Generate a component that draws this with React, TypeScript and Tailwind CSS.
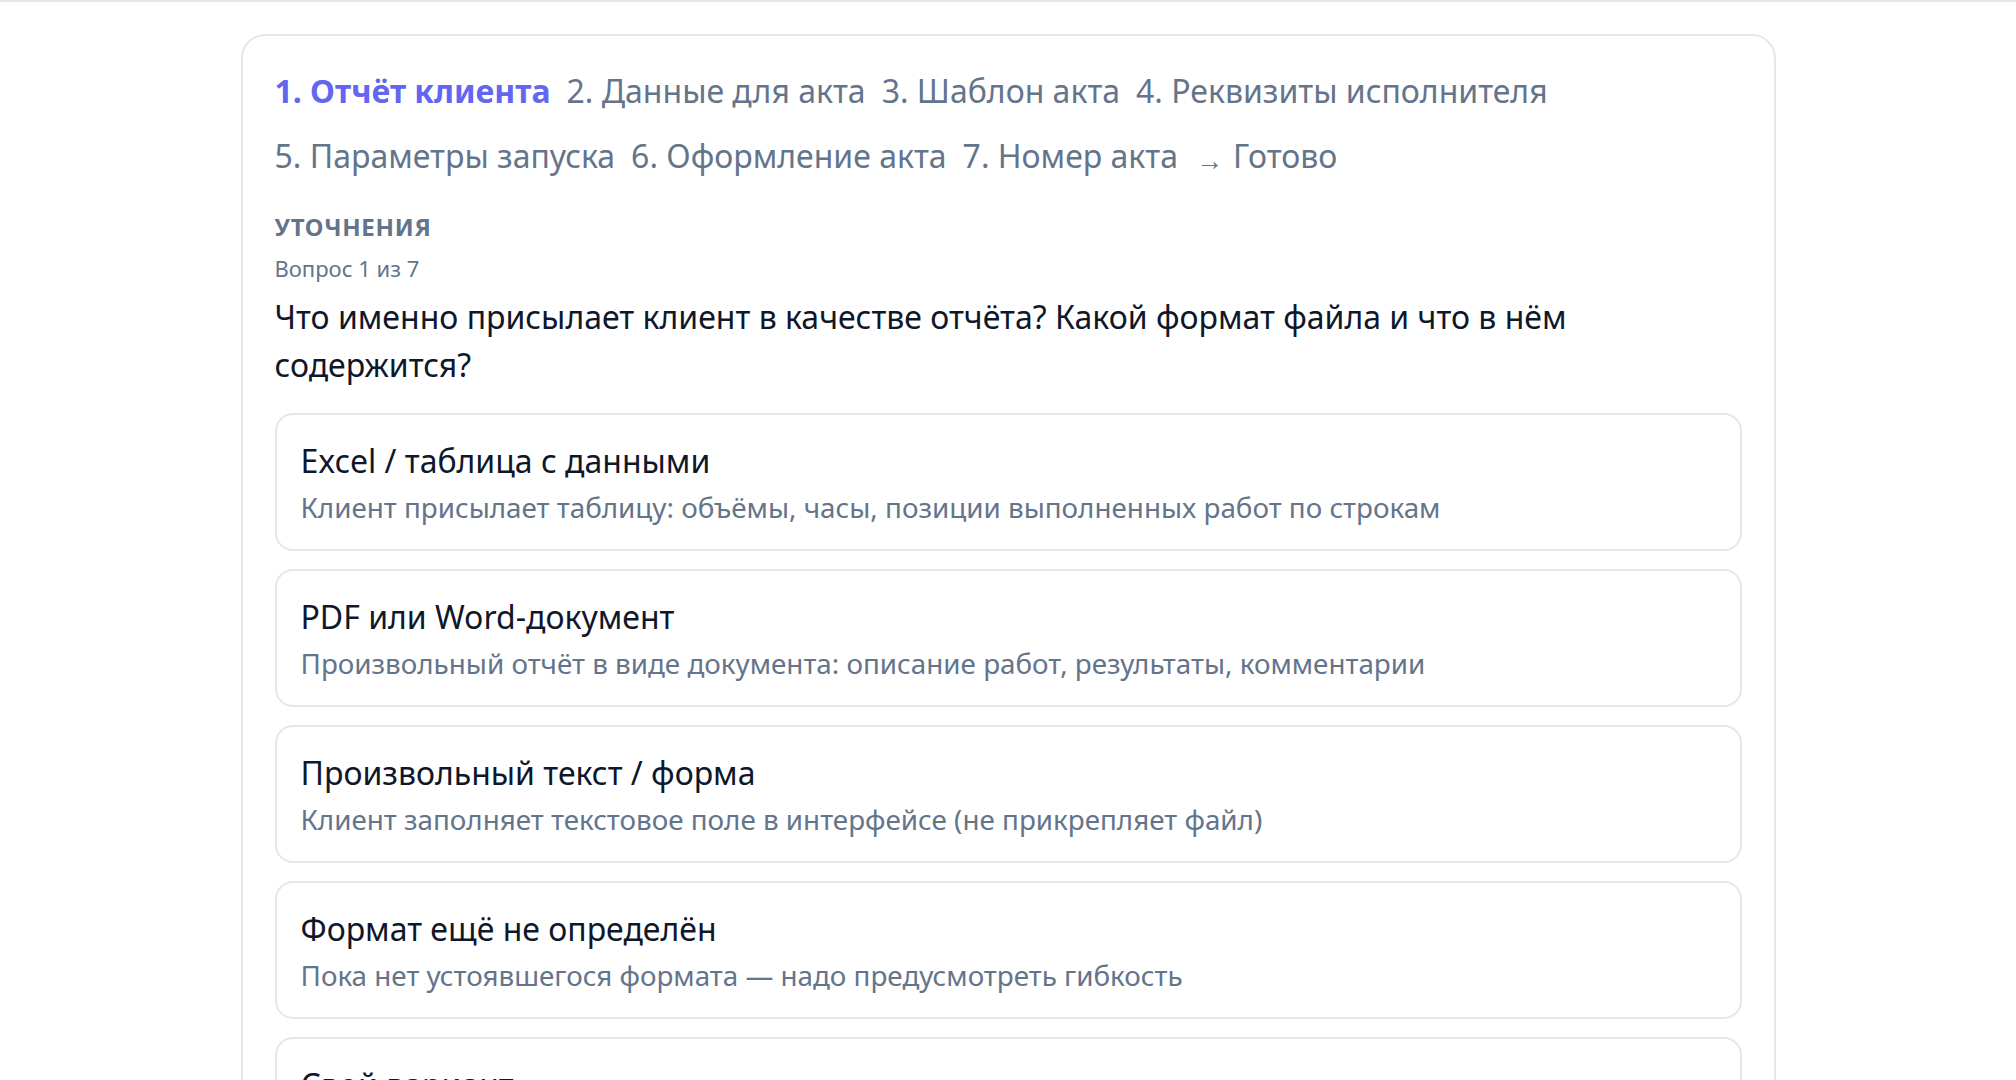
import React from 'react';

interface Step {
    label: string;
    active?: boolean;
}

interface Option {
    title: string;
    description: string;
}

const steps: Step[] = [
    {label: '1. Отчёт клиента', active: true},
    {label: '2. Данные для акта'},
    {label: '3. Шаблон акта'},
    {label: '4. Реквизиты исполнителя'},
    {label: '5. Параметры запуска'},
    {label: '6. Оформление акта'},
    {label: '7. Номер акта'},
];

const options: Option[] = [
    {
        title: 'Excel / таблица с данными',
        description: 'Клиент присылает таблицу: объёмы, часы, позиции выполненных работ по строкам',
    },
    {
        title: 'PDF или Word-документ',
        description: 'Произвольный отчёт в виде документа: описание работ, результаты, комментарии',
    },
    {
        title: 'Произвольный текст / форма',
        description: 'Клиент заполняет текстовое поле в интерфейсе (не прикрепляет файл)',
    },
    {
        title: 'Формат ещё не определён',
        description: 'Пока нет устоявшегося формата — надо предусмотреть гибкость',
    },
    {
        title: 'Свой вариант',
        description: 'Опишите формат отчёта своими словами',
    },
];

const OptionCard = ({title, description}: Option) => (
    <button
        type="button"
        className="block w-full text-left rounded-[18px] border-2 border-[#e2e8f0] bg-white px-[24px] pt-[24px] pb-[22px]"
    >
        <div className="text-[32px] leading-[44px] text-[#0f172a]">{title}</div>
        <div className="mt-[4px] text-[27.8px] leading-[40px] text-[#64748b]">{description}</div>
    </button>
);

export default function App() {
    return (
        <div className="min-h-screen bg-white font-['Noto_Sans',sans-serif]">
            {/* верхняя граница шапки */}
            <div className="h-[2px] bg-[#e2e8f0]"></div>

            <div className="pt-[32px]">
                <div className="mx-auto w-[1535px] rounded-[24px] border-2 border-[#e2e8f0] bg-white px-[32px] pt-[32px] pb-[40px]">
                    {/* шаги */}
                    <div className="flex flex-wrap gap-x-[16px] gap-y-[20px] text-[32px] leading-[45px]">
                        {steps.map((step) => (
                            <span
                                key={step.label}
                                className={step.active ? 'font-bold text-[#6366f1]' : 'text-[#64748b]'}
                            >
                                {step.label}
                            </span>
                        ))}
                        <span className="pl-[2px] text-[#64748b]">
                            <span className="inline-block translate-y-[2px] mr-[10px] text-[27px] leading-none">→</span>
                            Готово
                        </span>
                    </div>

                    {/* вопрос */}
                    <div className="mt-[31px] text-[24px] leading-[36px] font-bold uppercase tracking-[0.03em] text-[#64748b]">
                        Уточнения
                    </div>
                    <div className="mt-[8px] text-[22px] leading-[30px] text-[#64748b]">Вопрос 1 из 7</div>
                    <div className="mt-[10px] max-w-[1344px] text-[32px] leading-[48px] text-[#0f172a]">
                        Что именно присылает клиент в качестве отчёта? Какой формат файла и что в нём содержится?
                    </div>

                    {/* варианты ответа */}
                    <div className="mt-[24px] flex flex-col gap-[18px]">
                        {options.map((option) => (
                            <OptionCard key={option.title} {...option} />
                        ))}
                    </div>
                </div>
            </div>
        </div>
    );
}
